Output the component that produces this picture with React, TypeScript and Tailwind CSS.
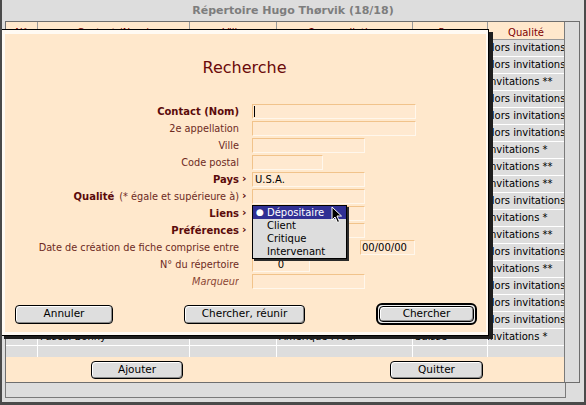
import type { ReactNode } from "react";

/** Colonne « Qualité » des 18 fiches, dans l'ordre de la liste. */
const QUALITES = [
  "Hors invitations",
  "Hors invitations",
  "Invitations **",
  "Hors invitations",
  "Hors invitations",
  "Hors invitations",
  "Invitations *",
  "Invitations **",
  "Invitations **",
  "Hors invitations",
  "Invitations *",
  "Invitations **",
  "Hors invitations",
  "Invitations **",
  "Hors invitations",
  "Hors invitations",
  "Hors invitations",
  "Invitations *",
];

const COLS = ["w-[31px]", "w-[152px]", "w-[87px]", "w-[136px]", "w-[75px]", "flex-1"];
const HEADERS = ["N°", "Contact (Nom)", "Ville", "2e appellation", "Pays", "Qualité"];

const field = "h-[15px] border border-[#f1c38b] border-b-[#fff7ec] border-r-[#fff7ec] bg-[#ffe9d0]";
const btn =
  "flex items-center justify-center rounded-[4px] border border-black bg-[#dedede] text-[10.5px] text-black shadow-[inset_1px_1px_0_#ffffff,inset_-1px_-1px_0_#8a8a8a]";

function Row({ label, arrow, children }: { label: ReactNode; arrow?: boolean; children: ReactNode }) {
  return (
    <div className="flex h-[17px] items-start">
      <div className="w-[238px] truncate text-right text-[9.75px] leading-[15px] text-[#6d2a1e]">{label}</div>
      <div className="w-[13px] pl-[3px] text-[11px] font-bold leading-[14px] text-[#5b0b0b]">{arrow ? "›" : ""}</div>
      {children}
    </div>
  );
}

function Bold({ children }: { children: ReactNode }) {
  return <span className="text-[10px] font-bold text-[#5b0b0b]">{children}</span>;
}

export default function App() {
  return (
    <div className="relative flex h-[405px] w-[586px] flex-col overflow-hidden border-b-[3px] border-l-2 border-r-2 border-[#4a4a4a] bg-[#dddddd] font-['DejaVu_Sans',sans-serif]">
      <div className="flex h-[21px] shrink-0 items-center justify-center pt-px text-[11px] font-bold text-[#7d7d7d]">
        Répertoire Hugo Thørvik (18/18)
      </div>

      {/* liste des fiches, derrière la boîte de dialogue */}
      <div className="ml-[3px] flex h-[362px] w-[575px] shrink-0 border border-[#6e6e6e]">
        <div className="flex w-[559px] flex-col border-r border-[#7a7a7a]">
          <div className="flex h-[18px] shrink-0 border-b border-[#9a9a9a] bg-[#ffe8cc]">
            {HEADERS.map((h, i) => (
              <div
                key={h}
                className={`${COLS[i]} ${i ? "border-l border-[#9a9a9a]" : ""} pt-[2px] text-center text-[10px] leading-[18px] text-[#800000]`}
              >
                {h}
              </div>
            ))}
          </div>
          {QUALITES.map((q, r) => {
            const last = r === QUALITES.length - 1;
            const cells = last ? ["4", "Pascal Bonny", "", "Amérique Prod.", "Suisse", q] : ["", "", "", "", "", q];
            return (
              <div key={r} className="flex h-[17px] shrink-0 border-b border-white">
                {cells.map((c, i) => (
                  <div
                    key={i}
                    className={`${COLS[i]} ${i ? "border-l border-white" : "text-center"} overflow-hidden whitespace-nowrap text-[10px] leading-[16px] text-black`}
                  >
                    <span className={i === 5 ? "-ml-px" : "pl-[2px]"}>{c}</span>
                  </div>
                ))}
              </div>
            );
          })}
          <div className="flex h-[11px] shrink-0">
            {COLS.map((c, i) => (
              <div key={i} className={`${c} ${i ? "border-l border-white" : ""}`} />
            ))}
          </div>
          <div className="flex h-[25px] shrink-0 items-start bg-[#ffe8cc] pt-[4px]">
            <div className={`${btn} ml-[85px] h-[18px] w-[92px]`}>Ajouter</div>
            <div className={`${btn} ml-[207px] h-[18px] w-[93px]`}>Quitter</div>
          </div>
        </div>
        <div className="flex-1" />
      </div>
      <div className="ml-[3px] h-[15px] w-[561px] shrink-0 border-b border-l border-r border-[#7a7a7a]" />

      {/* boîte de dialogue Recherche */}
      <div className="absolute left-[-2px] top-[29px] flex h-[307px] w-[489px] flex-col border border-black bg-[#ffe8cc] shadow-[4px_3px_0_#1e1e1e,inset_4px_4px_0_#fffaf3,inset_-2px_-3px_0_#fffaf3]">
        <div className="mt-[30px] text-center text-[16px] leading-[16px] text-[#6b0a0a]">Recherche</div>

        <div className="mt-[28px] flex flex-col">
          <Row label={<Bold>Contact (Nom)</Bold>}>
            <div className={`${field} w-[164px]`}>
              <div className="ml-px mt-px h-[11px] w-px bg-black" />
            </div>
          </Row>
          <Row label="2e appellation">
            <div className={`${field} w-[164px]`} />
          </Row>
          <Row label="Ville">
            <div className={`${field} w-[113px]`} />
          </Row>
          <Row label="Code postal">
            <div className={`${field} w-[71px]`} />
          </Row>
          <Row label={<Bold>Pays</Bold>} arrow>
            <div className={`${field} w-[113px] pl-[2px] text-[10px] leading-[13px] text-black`}>U.S.A.</div>
          </Row>
          <Row
            label={
              <>
                <Bold>Qualité</Bold>
                <span className="ml-[5px]">(* égale et supérieure à)</span>
              </>
            }
            arrow
          >
            <div className={`${field} w-[113px]`} />
          </Row>
          <Row label={<Bold>Liens</Bold>} arrow>
            <div className={`${field} w-[113px]`} />
          </Row>
          <Row label={<Bold>Préférences</Bold>} arrow>
            <div className={`${field} w-[113px]`} />
          </Row>
          <Row label="Date de création de fiche comprise entre">
            <div className={`${field} w-[55px]`} />
            <div className={`${field} ml-[53px] w-[55px] pl-px text-[10px] leading-[13px] text-black`}>00/00/00</div>
          </Row>
          <Row label="N° du répertoire">
            <div className={`${field} w-[58px] text-center text-[10px] leading-[13px] text-black`}>0</div>
          </Row>
          <Row label={<span className="italic text-[#8a4634]">Marqueur</span>}>
            <div className={`${field} w-[113px]`} />
          </Row>
        </div>

        <div className="mt-[12px] flex h-[22px] items-center">
          <div className={`${btn} ml-[14px] h-[19px] w-[98px]`}>Annuler</div>
          <div className={`${btn} ml-[71px] h-[19px] w-[121px]`}>Chercher, réunir</div>
          <div className="ml-[71px] flex h-[22px] w-[101px] rounded-[6px] border-2 border-black bg-[#eeeeee] p-px">
            <div className={`${btn} h-full w-full`}>Chercher</div>
          </div>
        </div>
      </div>

      {/* menu local « Liens » ouvert */}
      <div className="absolute left-[250px] top-[205px] w-[95px] border border-black bg-[#dddddd] shadow-[2px_2px_0_#2a2a2a]">
        {["Dépositaire", "Client", "Critique", "Intervenant"].map((item, i) => (
          <div
            key={item}
            className={`flex h-[13px] items-center text-[10px] leading-[13px] ${i === 0 ? "bg-[#303094] text-white" : "text-black"}`}
          >
            <span className="w-[14px] pl-[3px] text-[9px]">{i === 0 ? "●" : ""}</span>
            {item}
          </div>
        ))}
      </div>

      <svg className="absolute left-[329px] top-[206px]" width="12" height="18" viewBox="0 0 12 18">
        <path d="M1 1 L1 14 L4 11 L6.5 16.5 L8.5 15.5 L6 10 L10.5 10 Z" fill="#000" stroke="#fff" strokeWidth="1" />
      </svg>
    </div>
  );
}
